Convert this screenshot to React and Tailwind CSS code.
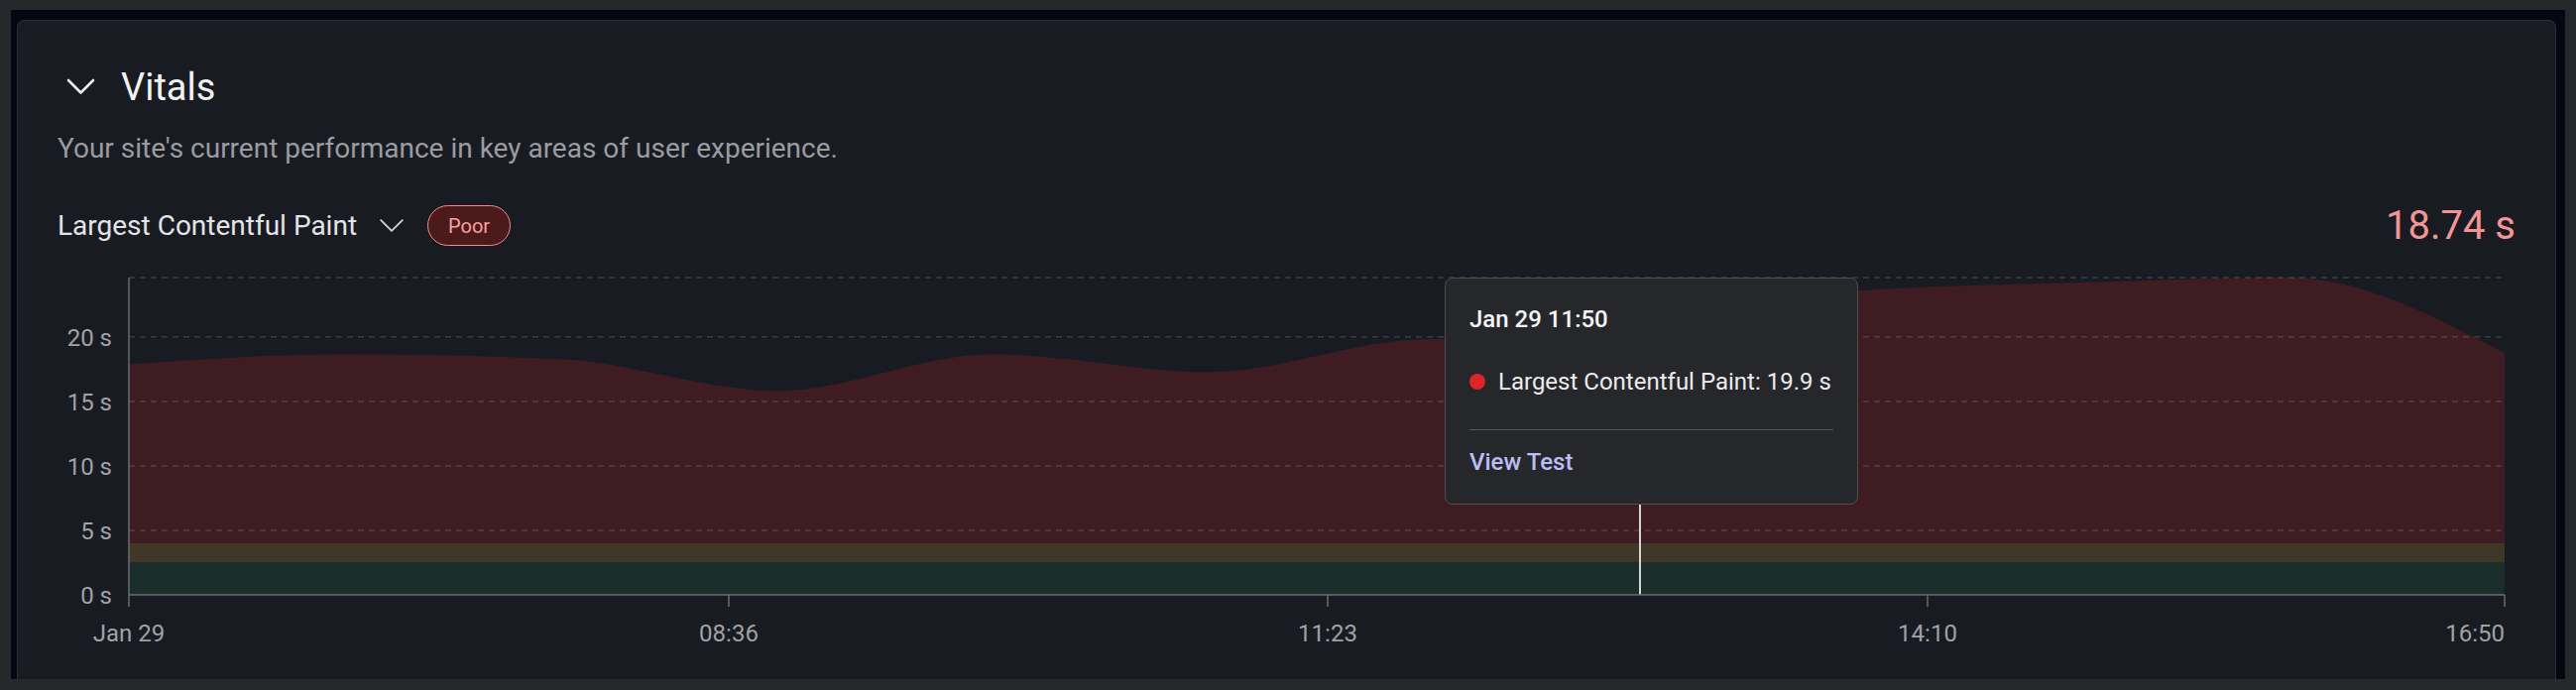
const LCP = [17.87, 18.67, 18.27, 15.82, 18.67, 17.28, 19.81, 19.9, 23.59, 24.19, 24.6, 18.74];

// chart frame, in page pixels (the svg viewBox uses page coordinates)
const X0 = 130;
const X1 = 2526;
const Y0 = 600;
const YTOP = 280;
const MAX = 24.6;

const sx = (i) => X0 + (i * (X1 - X0)) / (LCP.length - 1);
const sy = (v) => Y0 - (v / MAX) * (Y0 - YTOP);

const yTicks = [0, 5, 10, 15, 20];
const xTicks = [
  { x: 130, label: "Jan 29", anchor: "middle" },
  { x: 735, label: "08:36", anchor: "middle" },
  { x: 1339, label: "11:23", anchor: "middle" },
  { x: 1944, label: "14:10", anchor: "middle" },
  { x: 2526, label: "16:50", anchor: "end" },
];

// d3 style monotoneX curve
const sign = (v) => (v < 0 ? -1 : 1);
function monotonePath(pts) {
  const n = pts.length;
  const t = new Array(n).fill(0);
  for (let i = 1; i < n - 1; i++) {
    const [x0, y0] = pts[i - 1];
    const [x1, y1] = pts[i];
    const [x2, y2] = pts[i + 1];
    const h0 = x1 - x0;
    const h1 = x2 - x1;
    const s0 = (y1 - y0) / h0;
    const s1 = (y2 - y1) / h1;
    const p = (s0 * h1 + s1 * h0) / (h0 + h1);
    t[i] = (sign(s0) + sign(s1)) * Math.min(Math.abs(s0), Math.abs(s1), 0.5 * Math.abs(p)) || 0;
  }
  const sFirst = (pts[1][1] - pts[0][1]) / (pts[1][0] - pts[0][0]);
  const sLast = (pts[n - 1][1] - pts[n - 2][1]) / (pts[n - 1][0] - pts[n - 2][0]);
  t[0] = (3 * sFirst - t[1]) / 2;
  t[n - 1] = (3 * sLast - t[n - 2]) / 2;

  let d = `M${pts[0][0]},${pts[0][1]}`;
  for (let i = 0; i < n - 1; i++) {
    const [xa, ya] = pts[i];
    const [xb, yb] = pts[i + 1];
    const dx = (xb - xa) / 3;
    d += ` C${xa + dx},${ya + dx * t[i]} ${xb - dx},${yb - dx * t[i + 1]} ${xb},${yb}`;
  }
  return d;
}

function Chevron({ className }) {
  return (
    <svg width="29" height="18" viewBox="0 0 29 18" className={className}>
      <polyline points="2,2 14.5,14.5 27,2" fill="none" stroke="currentColor" strokeWidth="2.6" strokeLinecap="round" strokeLinejoin="round" />
    </svg>
  );
}

function SmallChevron({ className }) {
  return (
    <svg width="24" height="13" viewBox="0 0 24 13" className={className}>
      <polyline points="1.2,1.2 12,11.8 22.8,1.2" fill="none" stroke="currentColor" strokeWidth="1.8" strokeLinecap="round" strokeLinejoin="round" />
    </svg>
  );
}

function Chart() {
  const pts = LCP.map((v, i) => [sx(i), sy(v)]);
  const curve = monotonePath(pts);
  const poorY = sy(4);
  const goodY = sy(2.5);
  const redArea = `${curve} L${X1},${poorY} L${X0},${poorY} Z`;

  return (
    <div className="relative h-[433px] w-[2479px]">
      <svg width="2479" height="433" viewBox="58 252 2479 433" className="block">
        <path d={redArea} fill="#3e1c22" />
        <rect x={X0} y={poorY} width={X1 - X0} height={goodY - poorY} fill="#403827" />
        <rect x={X0} y={goodY} width={X1 - X0} height={Y0 - goodY} fill="#1b2e2c" />

        {/* grid */}
        {[YTOP, ...yTicks.slice(1).map(sy)].map((y) => (
          <line key={y} x1={X0} x2={X1} y1={y} y2={y} stroke="rgba(255,255,255,0.15)" strokeWidth="1.5" strokeDasharray="6 5" />
        ))}

        {/* cursor */}
        <line x1="1654" x2="1654" y1={YTOP} y2={Y0} stroke="#d6d6d6" strokeWidth="2" />

        {/* axes */}
        <line x1={X0} x2={X0} y1={YTOP} y2={612} stroke="#6b6d71" strokeWidth="1.5" />
        <line x1={X0} x2={X1} y1={Y0} y2={Y0} stroke="#6b6d71" strokeWidth="1.5" />
        {xTicks.slice(1).map((t) => (
          <line key={t.x} x1={t.x} x2={t.x} y1={Y0} y2={612} stroke="#6b6d71" strokeWidth="1.5" />
        ))}

        {yTicks.map((v) => (
          <text key={v} x="113" y={sy(v) + 9} textAnchor="end" fontSize="24" fill="#a1a2a6">
            {v} s
          </text>
        ))}
        {xTicks.map((t) => (
          <text key={t.label} x={t.x} y="647" textAnchor={t.anchor} fontSize="24" fill="#a1a2a6">
            {t.label}
          </text>
        ))}
      </svg>

      {/* Tooltip */}
      <div className="absolute left-[1399px] top-[28px] h-[229px] w-[417px] rounded-lg border-[1.5px] border-[#4b4d52] bg-[#26272b] px-[24px] pt-[27px]">
        <div className="text-[24px] font-medium leading-[28px] text-[#f5f5f5]">Jan 29 11:50</div>
        <div className="mt-[35px] flex items-center gap-[13px] text-[24px] leading-[28px] text-[#ececec]">
          <span className="h-[16px] w-[16px] rounded-full bg-[#dc2626]" />
          <span>Largest Contentful Paint: 19.9 s</span>
        </div>
        <div className="mt-[34px] border-t-[1.5px] border-[#55575c]" />
        <div className="mt-[18px] text-[24px] font-medium leading-[28px] text-[#bdbcf7]">View Test</div>
      </div>
    </div>
  );
}

export default function App() {
  return (
    <div className="h-[696px] w-[2598px] bg-[#27282b] pb-[11px] pl-[11px] pr-[11px] pt-[10px] font-[Roboto,sans-serif]">
      <div className="h-full bg-[#030712] pl-[6px] pr-[9px] pt-[10px]">
        <div className="flex h-full flex-col rounded-t-lg border border-b-0 border-[#2b2e35] bg-[#191b22] px-[40px] pt-[45px]">
          {/* Header */}
          <div className="flex h-[44px] items-center">
            <Chevron className="ml-[9px] text-[#ededee]" />
            <h2 className="ml-[26px] text-[38px] font-normal leading-[44px] text-[#f2f2f3]">Vitals</h2>
          </div>
          <p className="mt-[23px] text-[28px] leading-[33px] text-[#9b9ca1]">
            Your site's current performance in key areas of user experience.
          </p>

          {/* Metric selector */}
          <div className="mt-[37px] flex h-[49px] items-center justify-between">
            <div className="flex items-center">
              <span className="text-[28px] leading-[33px] text-[#e4e4e7]">Largest Contentful Paint</span>
              <SmallChevron className="ml-[23px] text-[#d4d4d8]" />
              <span className="ml-[24px] flex h-[41px] items-center rounded-full border-[1.5px] border-[#f28b8b] bg-[#4d1a1c] px-[20px] text-[20px] leading-none text-[#f7a1a1]">
                Poor
              </span>
            </div>
            <span className="text-[40px] leading-[49px] text-[#f49494]">18.74 s</span>
          </div>

          <Chart />
        </div>
      </div>
    </div>
  );
}
